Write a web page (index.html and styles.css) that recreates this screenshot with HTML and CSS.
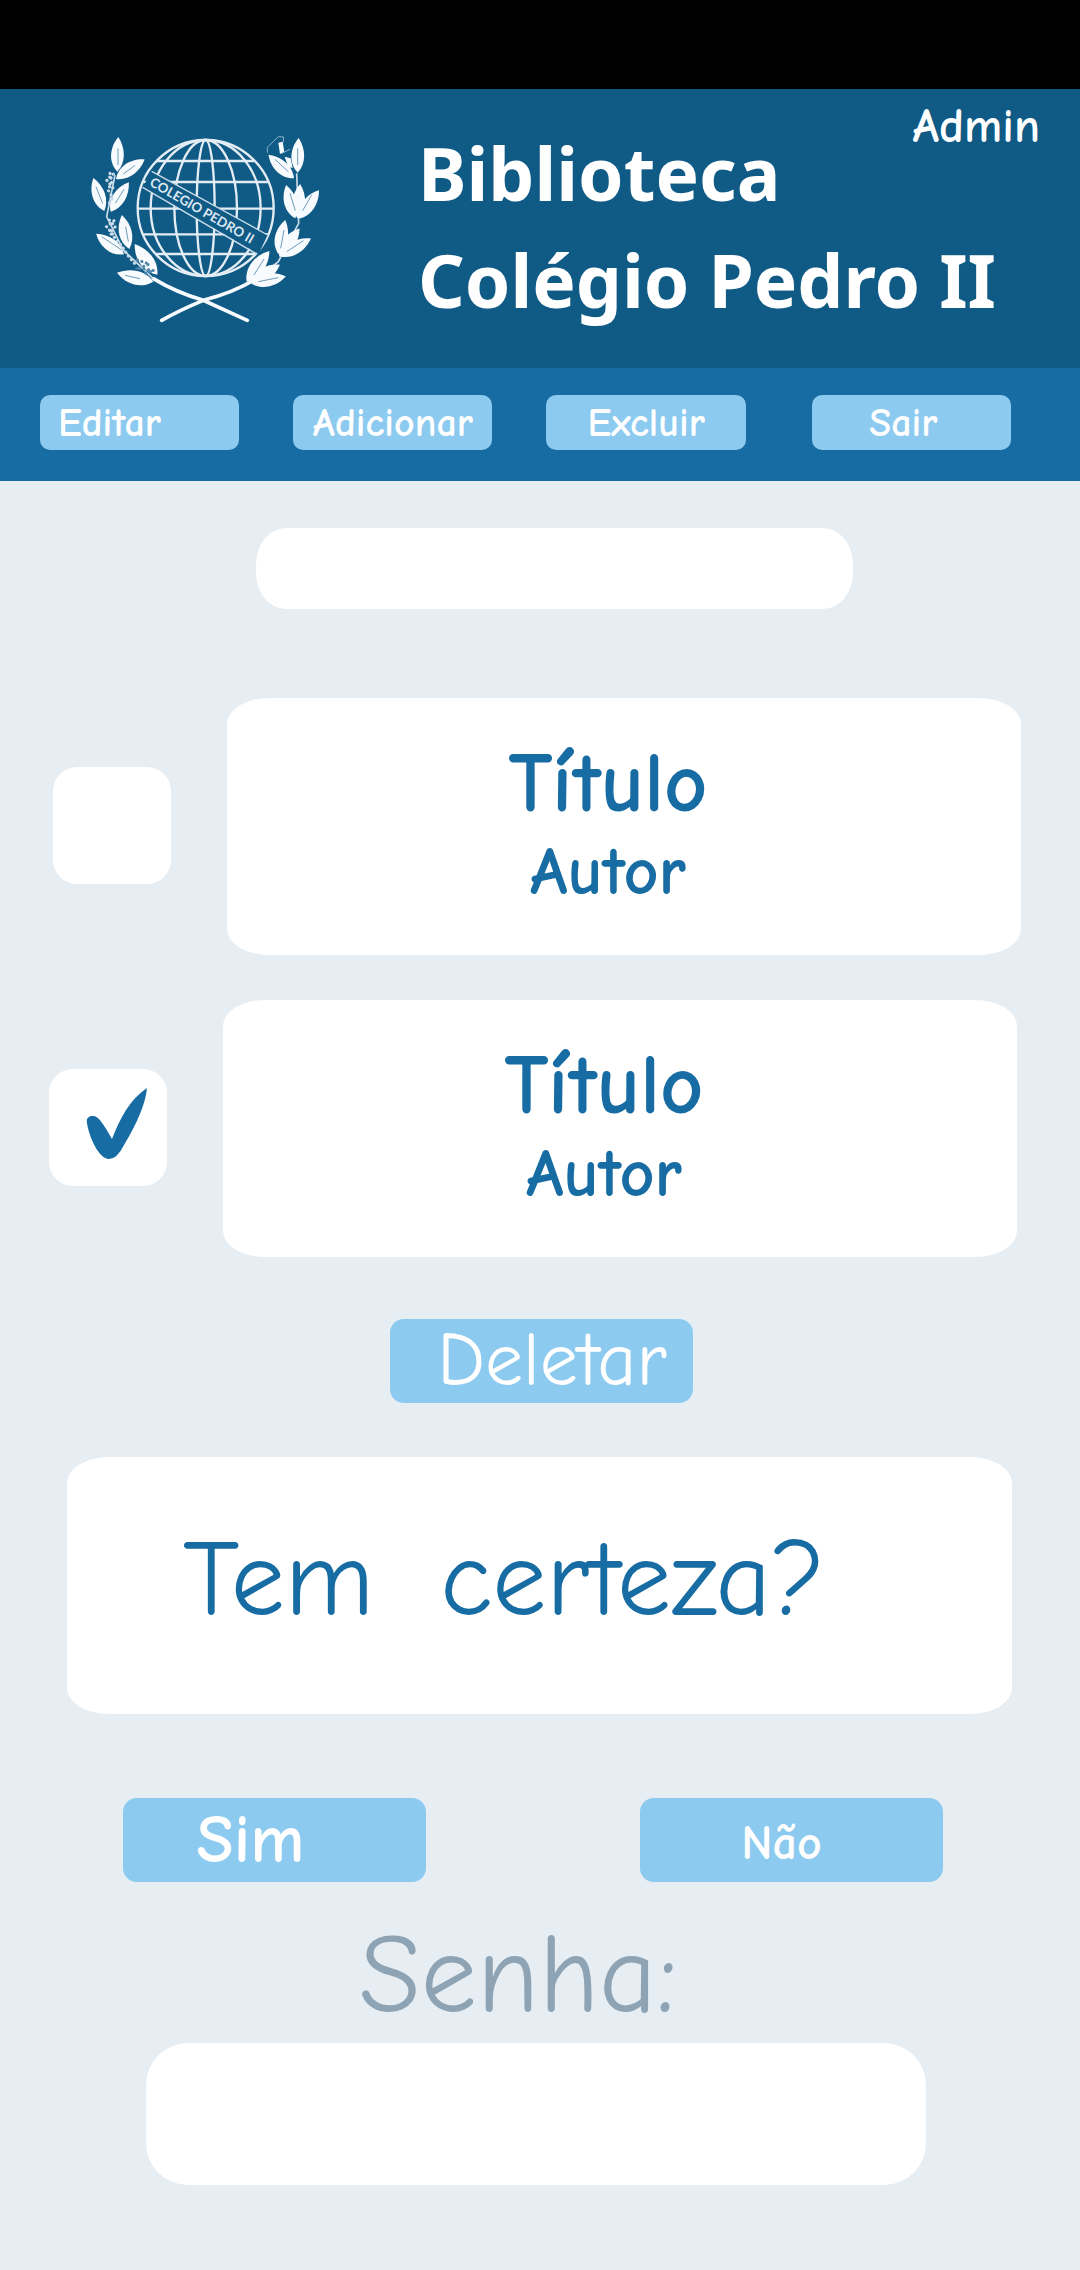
FILE: index.html
```html
<!DOCTYPE html>
<html lang="pt-BR">
<head>
<meta charset="utf-8">
<meta name="viewport" content="width=device-width, initial-scale=1">
<title>Biblioteca Colégio Pedro II</title>
<link rel="stylesheet" href="styles.css">
</head>
<body>
<div class="statusbar"></div>
<header class="header">
  <svg class="logo" viewBox="0 0 900 690" role="img" aria-label="Emblema do Colégio Pedro II">
    <defs>
      <path id="leaf" d="M0 0C-27-28-24-72 3-104C25-70 26-28 0 0Z"/>
    </defs>
    <g fill="none" stroke="#e4edf4" stroke-width="7">
      <circle cx="437" cy="294" r="204"/>
      <ellipse cx="437" cy="294" rx="165" ry="204"/>
      <ellipse cx="437" cy="294" rx="94" ry="204"/>
      <ellipse cx="437" cy="294" rx="27" ry="204"/>
      <path d="M291 153H583M250 216H624M233 296H641M250 373H624M289 432H585"/>
    </g>
    <path d="M275 184L623 375L596 432L248 232Z" fill="#105a86"/>
    <path d="M275 184L623 375M248 232L590 432" fill="none" stroke="#c9dce9" stroke-width="4"/>
    <text class="ribbon" transform="translate(266 225) rotate(30)">COLEGIO PEDRO II</text>
    <g fill="none" stroke="#f8fbfd" stroke-width="11" stroke-linecap="round">
      <path d="M280 506Q350 548 430 571L562 631M586 508Q520 548 430 571Q360 600 305 631"/>
    </g>
    <g fill="none" stroke="#c9dce9" stroke-width="5">
      <path d="M165 195L140 320L190 420L280 506M710 190L716 340L655 455L586 508"/>
    </g>
    <g fill="#f8fbfd">
      <use href="#leaf" transform="translate(172 185)"/>
      <use href="#leaf" transform="translate(168 207) rotate(54)"/>
      <use href="#leaf" transform="translate(133 303) rotate(-20)"/>
      <use href="#leaf" transform="translate(152 305) rotate(30)"/>
      <use href="#leaf" transform="translate(192 433) rotate(-55)"/>
      <use href="#leaf" transform="translate(208 417) rotate(-14)"/>
      <use href="#leaf" transform="translate(292 494) rotate(-38) scale(1.1)"/>
      <use href="#leaf" transform="translate(280 515) rotate(-78) scale(1.08)"/>
      <use href="#leaf" transform="translate(713 188)"/>
      <use href="#leaf" transform="translate(702 205) rotate(-49)"/>
      <use href="#leaf" transform="translate(706 325) rotate(-17)"/>
      <use href="#leaf" transform="translate(714 326) rotate(2)"/>
      <use href="#leaf" transform="translate(718 326) rotate(33)"/>
      <use href="#leaf" transform="translate(655 432) rotate(10)"/>
      <use href="#leaf" transform="translate(658 440) rotate(34)"/>
      <use href="#leaf" transform="translate(664 440) rotate(57)"/>
      <use href="#leaf" transform="translate(560 515) rotate(35) scale(1.1)"/>
      <use href="#leaf" transform="translate(572 520) rotate(56)"/>
      <use href="#leaf" transform="translate(576 522) rotate(76)"/>
      <path d="M655 98L668 95L673 126L660 132ZM674 140L692 145L698 174L685 171Z"/>
    </g>
    <path d="M622 128L622 112L655 80L671 81L670 97M666 130L690 118" fill="none" stroke="#8fb3cb" stroke-width="3"/>
    <g fill="none" stroke="#6f9cba" stroke-width="3">
      <path d="M174 165V115M190 192L225 166M128 280L108 230M166 280L192 238M713 165V115M685 185L645 148M706 302L690 250M728 302L755 255M662 415L672 360M680 425L730 392M582 495L612 447M595 515L655 503M185 420L125 380M205 395L197 350M240 506L195 496"/>
    </g>
    <g fill="none" stroke="#c9dce9" stroke-width="9" stroke-linecap="round" stroke-dasharray="1 13">
      <path d="M150 190L156 215L144 240L158 262L145 285M148 330L166 350L150 368L170 390L188 412L206 440L225 462M160 192L140 210L160 235M162 332L140 350L160 375"/>
      <path stroke="#4f86aa" d="M232 450L268 462L238 475L282 482L248 492"/>
    </g>
  </svg>
  <h1 class="title">Biblioteca<br>Colégio Pedro II</h1>
  <span class="role">Admin</span>
</header>
<nav class="nav">
  <button class="btn nav-btn nav-btn-start" type="button">Editar</button>
  <button class="btn nav-btn" type="button">Adicionar</button>
  <button class="btn nav-btn" type="button">Excluir</button>
  <button class="btn nav-btn nav-btn-exit" type="button">Sair</button>
</nav>
<main class="main">
  <input class="field search" type="search" aria-label="Pesquisar">
  <ul class="books">
    <li>
      <label class="book">
        <span class="check">
          <input class="check-box" type="checkbox">
          <svg class="check-mark" viewBox="0 0 118 117" aria-hidden="true"><path d="M38 54C37 49 40 47 43 47C49 46 54 54 63 70Q69 54 77 41Q86 27 98 19Q96 41 75 76Q68 90 60 90C50 90 40 68 38 54Z"/></svg>
        </span>
        <span class="card book-card">
          <span class="book-title">Título</span>
          <span class="book-author">Autor</span>
        </span>
      </label>
    </li>
    <li>
      <label class="book book-selected">
        <span class="check">
          <input class="check-box" type="checkbox" checked>
          <svg class="check-mark" viewBox="0 0 118 117" aria-hidden="true"><path d="M38 54C37 49 40 47 43 47C49 46 54 54 63 70Q69 54 77 41Q86 27 98 19Q96 41 75 76Q68 90 60 90C50 90 40 68 38 54Z"/></svg>
        </span>
        <span class="card book-card">
          <span class="book-title">Título</span>
          <span class="book-author">Autor</span>
        </span>
      </label>
    </li>
  </ul>
  <button class="btn action delete" type="button">Deletar</button>
  <section class="card confirm">
    <p class="question"><span>Tem</span> <span>certeza?</span></p>
  </section>
  <div class="answers">
    <button class="btn action yes" type="button">Sim</button>
    <button class="btn action no" type="button">Não</button>
  </div>
  <label class="password-label" for="senha">Senha:</label>
  <input class="field password" id="senha" type="password">
</main>
</body>
</html>
```
FILE: styles.css
```css
* {
  box-sizing: border-box;
}

body {
  margin: 0;
  background: #e6edf3;
  color: #166ca3;
  font-family: "Comic Neue", cursive, "Lato", sans-serif;
}

.statusbar {
  height: 89px;
  background: #000;
}

.header {
  position: relative;
  display: flex;
  align-items: center;
  gap: 58px;
  min-height: 279px;
  padding: 0 40px 8px 60px;
  background: #105a86;
  color: #fff;
}

.logo {
  flex: none;
  width: 300px;
  height: 230px;
}

.ribbon {
  fill: #dce8f1;
  font-family: "Lato", sans-serif;
  font-size: 40px;
  font-weight: 700;
}

.title {
  margin: 0;
  padding-top: 2px;
  font-family: "Noto Sans", sans-serif;
  font-size: 73px;
  line-height: 107px;
  font-weight: 700;
  white-space: nowrap;
}

.role {
  position: absolute;
  top: 8px;
  right: 40px;
  font-size: 48px;
  line-height: 60px;
  font-weight: 700;
}

.nav {
  display: grid;
  grid-template-columns: repeat(3, 199fr) 211fr;
  gap: 54px;
  padding: 27px 69px 31px 40px;
  background: #166ca3;
}

.btn {
  padding: 0;
  border: 0;
  background: #8dcaf0;
  color: #fff;
  font-family: inherit;
  cursor: pointer;
}

.nav-btn {
  height: 55px;
  border-radius: 10px;
  font-size: 40px;
  line-height: 48px;
  font-weight: 700;
}

.nav-btn-start {
  padding-left: 18px;
  text-align: left;
}

.nav-btn-exit {
  margin-left: 12px;
  padding-right: 16px;
}

.main {
  display: flex;
  flex-direction: column;
  padding: 47px 59px 85px 49px;
}

.field {
  border: 0;
  background: #fff;
  color: #166ca3;
  font-family: inherit;
  font-size: 48px;
}

.search {
  min-height: 81px;
  margin: 0 168px 0 207px;
  padding: 0 30px;
  border-radius: 30px / 36px;
  appearance: none;
}

.books {
  display: grid;
  gap: 45px;
  margin: 89px 0 62px;
  padding: 0;
  list-style: none;
}

.book {
  display: flex;
  align-items: center;
  gap: 56px;
  margin: 0 0 0 4px;
}

.book-selected {
  margin: 0 4px 0 0;
}

.check {
  position: relative;
  flex: none;
  width: 118px;
  height: 117px;
  margin-bottom: 2px;
}

.check-box {
  width: 100%;
  height: 100%;
  margin: 0;
  border-radius: 24px;
  background: #fff;
  appearance: none;
}

.check-mark {
  position: absolute;
  inset: 0;
  display: none;
  fill: #166ca3;
}

.check-box:checked + .check-mark {
  display: block;
}

.card {
  min-height: 257px;
  border-radius: 42px / 26px;
  background: #fff;
}

.book-card {
  display: flex;
  flex: 1;
  flex-direction: column;
  align-items: center;
  padding: 38px 32px 0 0;
  font-weight: 700;
}

.book-title {
  font-size: 84px;
  line-height: 96px;
}

.book-author {
  font-size: 68px;
  line-height: 80px;
}

.action {
  width: 303px;
  height: 84px;
  border-radius: 14px;
  font-size: 76px;
  line-height: 80px;
}

.delete {
  align-self: center;
  margin-left: 12px;
  padding-left: 22px;
}

.confirm {
  margin: 54px 9px 84px 18px;
  padding: 62px 0 0 116px;
}

.question {
  display: flex;
  gap: 66px;
  margin: 0;
  font-size: 108px;
  line-height: 120px;
}

.answers {
  display: flex;
  justify-content: space-between;
  padding: 0 78px 0 74px;
}

.yes {
  padding-right: 48px;
  font-size: 68px;
  font-weight: 700;
}

.no {
  padding: 6px 20px 0 0;
  font-size: 48px;
  font-weight: 700;
}

.password-label {
  align-self: center;
  margin: 33px 34px 8px 0;
  color: #8ea4b4;
  font-size: 112px;
  line-height: 120px;
}

.password {
  min-height: 142px;
  margin: 0 95px 0 97px;
  padding: 0 42px;
  border-radius: 42px;
}
```
